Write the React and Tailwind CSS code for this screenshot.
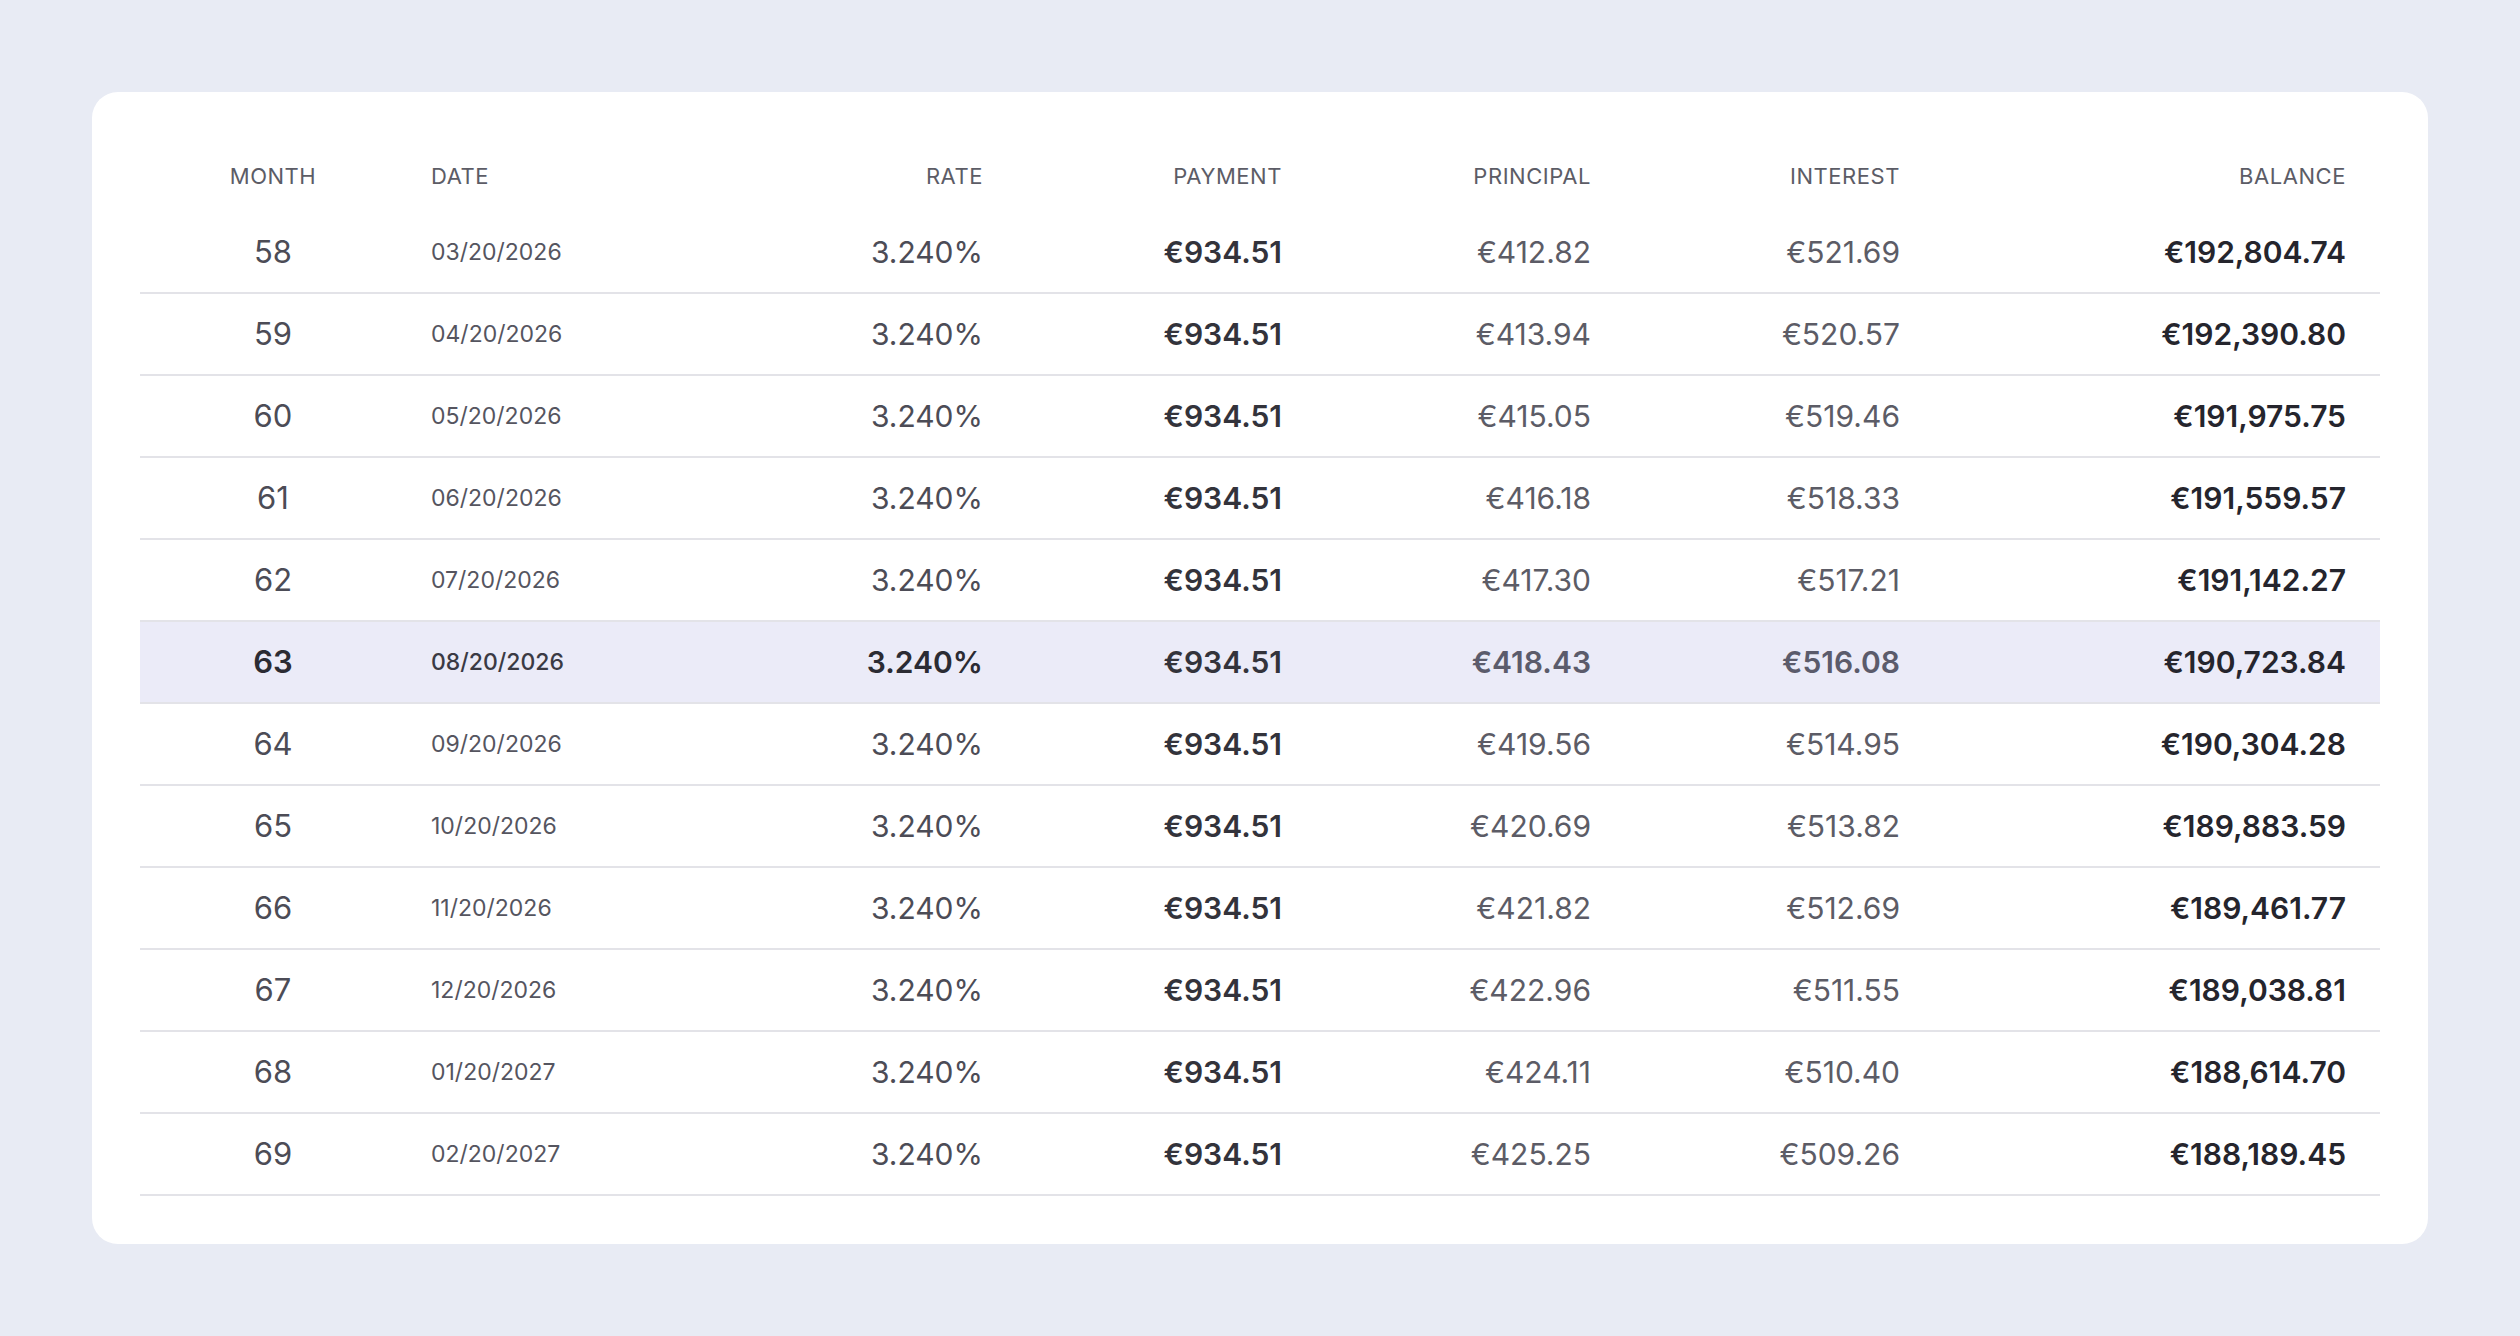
const rows = [
  [58, '03/20/2026', '€412.82', '€521.69', '€192,804.74'],
  [59, '04/20/2026', '€413.94', '€520.57', '€192,390.80'],
  [60, '05/20/2026', '€415.05', '€519.46', '€191,975.75'],
  [61, '06/20/2026', '€416.18', '€518.33', '€191,559.57'],
  [62, '07/20/2026', '€417.30', '€517.21', '€191,142.27'],
  [63, '08/20/2026', '€418.43', '€516.08', '€190,723.84'],
  [64, '09/20/2026', '€419.56', '€514.95', '€190,304.28'],
  [65, '10/20/2026', '€420.69', '€513.82', '€189,883.59'],
  [66, '11/20/2026', '€421.82', '€512.69', '€189,461.77'],
  [67, '12/20/2026', '€422.96', '€511.55', '€189,038.81'],
  [68, '01/20/2027', '€424.11', '€510.40', '€188,614.70'],
  [69, '02/20/2027', '€425.25', '€509.26', '€188,189.45'],
]

const cols = 'grid grid-cols-[266px_294px_317px_299px_309px_309px_446px]'

export default function App() {
  return (
    <div className="min-h-[1336px] bg-[#e8ebf4] pt-[92px] px-[92px]" style={{ fontFamily: 'Inter, "Noto Sans", sans-serif' }}>
      <div className="bg-white rounded-[26px] px-[48px] pt-[48px] pb-[48px]">
        <div className="rounded-tl-[40px] overflow-hidden">
          <div className={`${cols} h-[72px] items-center text-[22px] tracking-wide text-[#5c5c66]`}>
            <div className="text-center">MONTH</div>
            <div className="pl-[25px]">DATE</div>
            <div className="text-right pr-[34px]">RATE</div>
            <div className="text-right pr-[34px]">PAYMENT</div>
            <div className="text-right pr-[34px]">PRINCIPAL</div>
            <div className="text-right pr-[34px]">INTEREST</div>
            <div className="text-right pr-[34px]">BALANCE</div>
          </div>
          {rows.map(([m, d, p, i, b]) => {
            const hl = m === 63
            return (
              <div key={m} className={`${cols} h-[82px] items-center border-b-2 border-[#e3e3e8] ${hl ? 'bg-[#ebebf8]' : ''}`}>
                <div className={`text-center text-[31px] ${hl ? 'font-semibold text-[#2b2b33]' : 'text-[#4c4c56]'}`}>{m}</div>
                <div className={`pl-[25px] text-[23px] ${hl ? 'font-medium text-[#3a3a44]' : 'text-[#55555f]'}`}>{d}</div>
                <div className={`text-right pr-[34px] text-[30px] ${hl ? 'font-semibold text-[#2b2b33]' : 'text-[#4c4c56]'}`}>3.240%</div>
                <div className="text-right pr-[34px] text-[30px] font-semibold text-[#33333b]">€934.51</div>
                <div className={`text-right pr-[34px] text-[30px] ${hl ? 'font-semibold text-[#5b5b6b]' : 'text-[#5c5c66]'}`}>{p}</div>
                <div className={`text-right pr-[34px] text-[30px] ${hl ? 'font-semibold text-[#5b5b6b]' : 'text-[#5c5c66]'}`}>{i}</div>
                <div className="text-right pr-[34px] text-[30px] font-semibold text-[#25252d]">{b}</div>
              </div>
            )
          })}
        </div>
      </div>
    </div>
  )
}
